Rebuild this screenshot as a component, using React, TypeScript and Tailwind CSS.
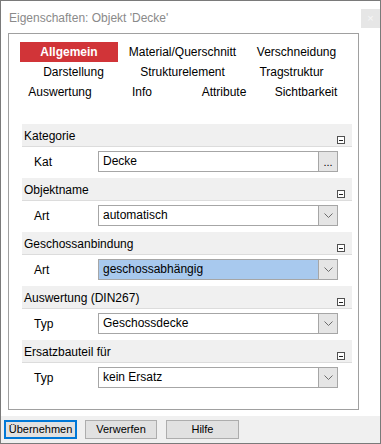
import React from 'react';

const font = { fontFamily: '"Liberation Sans", Arial, sans-serif' };

type Field = { label: string; value: string; kind: 'browse' | 'select'; selected?: boolean };
type Group = { title: string; field: Field };

const groups: Group[] = [
  { title: 'Kategorie', field: { label: 'Kat', value: 'Decke', kind: 'browse' } },
  { title: 'Objektname', field: { label: 'Art', value: 'automatisch', kind: 'select' } },
  { title: 'Geschossanbindung', field: { label: 'Art', value: 'geschossabhängig', kind: 'select', selected: true } },
  { title: 'Auswertung (DIN267)', field: { label: 'Typ', value: 'Geschossdecke', kind: 'select' } },
  { title: 'Ersatzbauteil für', field: { label: 'Typ', value: 'kein Ersatz', kind: 'select' } },
];

function Chevron() {
  return (
    <svg width="9" height="5" viewBox="0 0 9 5">
      <path d="M0.5 0.5 L4.5 4.5 L8.5 0.5" fill="none" stroke="#6b6b6b" strokeWidth="1" />
    </svg>
  );
}

function GroupBlock({ g }: { g: Group }) {
  const f = g.field;
  return (
    <div className="mb-[6px]">
      {/* group header */}
      <div className="h-[23px] bg-[#f0f0f0] border-b border-[#dcdcdc] flex justify-between">
        <span className="pl-[2px] pt-[5px] text-[12px] leading-[14px] text-black">{g.title}</span>
        <div className="self-end mb-[2px] mr-[7px] w-[8px] h-[8px] border border-[#505050] bg-white flex items-center justify-center">
          <div className="w-[4px] h-px bg-[#202020]" />
        </div>
      </div>
      {/* field row */}
      <div className="mt-[4px] flex items-center h-[21px]">
        <span className="w-[76px] pl-[12px] pt-px text-[12px] text-black">{f.label}</span>
        <div className="w-[240px] h-[21px] border border-[#a6a6a6] flex">
          <span
            className={`flex-1 pl-[4px] text-[12px] leading-[19px] text-black ${f.selected ? 'bg-[#a8c9ee]' : 'bg-white'}`}
          >
            {f.value}
          </span>
          <div className="w-[19px] border-l border-[#a6a6a6] bg-[#e5e5e5] flex items-center justify-center">
            {f.kind === 'browse' ? (
              <span className="text-[11px] leading-[11px] text-black pt-[2px]">...</span>
            ) : (
              <Chevron />
            )}
          </div>
        </div>
      </div>
    </div>
  );
}

export default function App() {
  return (
    <div className="w-[381px] h-[444px] border border-[#7a7a7a] bg-white flex flex-col" style={font}>
      {/* TITLE */}
      <div className="h-[32px] flex shrink-0">
        <span className="pl-[8px] pt-[9px] text-[12px] leading-[16px] text-[#8a8a8a]">Eigenschaften: Objekt 'Decke'</span>
        <div className="ml-auto mt-[8px] w-[19px] h-[19px] bg-[#e6e6e6] flex items-center justify-center text-[11px] text-[#f6f6f6]">
          ×
        </div>
      </div>

      {/* PANEL */}
      <div className="ml-[7px] w-[351px] h-[377px] border border-[#a0a0a0] shrink-0">
        <div className="pt-[8px] pl-[10px] text-[12px] leading-[20px] text-black">
          <div className="grid grid-cols-3 w-[327px]">
            <div className="ml-px w-[98px] h-[20px] bg-[#d13438] text-white font-bold text-center">Allgemein</div>
            <div className="text-center">Material/Querschnitt</div>
            <div className="text-center pl-[10px]">Verschneidung</div>
          </div>
          <div className="grid grid-cols-3 w-[327px]">
            <div className="text-center">Darstellung</div>
            <div className="text-center">Strukturelement</div>
            <div className="text-center">Tragstruktur</div>
          </div>
          <div className="grid grid-cols-4 w-[328px]">
            <div className="text-center">Auswertung</div>
            <div className="text-center">Info</div>
            <div className="text-center">Attribute</div>
            <div className="text-center">Sichtbarkeit</div>
          </div>
        </div>

        <div className="mt-[22px] ml-[13px] mr-[6px]">
          {groups.map((g) => (
            <GroupBlock key={g.title} g={g} />
          ))}
        </div>
      </div>

      {/* BOTTOM BAR */}
      <div className="mt-[6px] flex-1 bg-[#f0f0f0] flex gap-[8px] pl-[3px] pt-[4px]">
        <button className="w-[73px] h-[19px] border-2 border-[#0078d7] bg-[#e1e1e1] text-[11px] leading-[15px] text-black">
          Übernehmen
        </button>
        <button className="w-[72px] h-[19px] border border-[#adadad] bg-[#e1e1e1] text-[11px] leading-[17px] text-black">
          Verwerfen
        </button>
        <button className="ml-px w-[73px] h-[19px] border border-[#adadad] bg-[#e1e1e1] text-[11px] leading-[17px] text-black">
          Hilfe
        </button>
      </div>
    </div>
  );
}
